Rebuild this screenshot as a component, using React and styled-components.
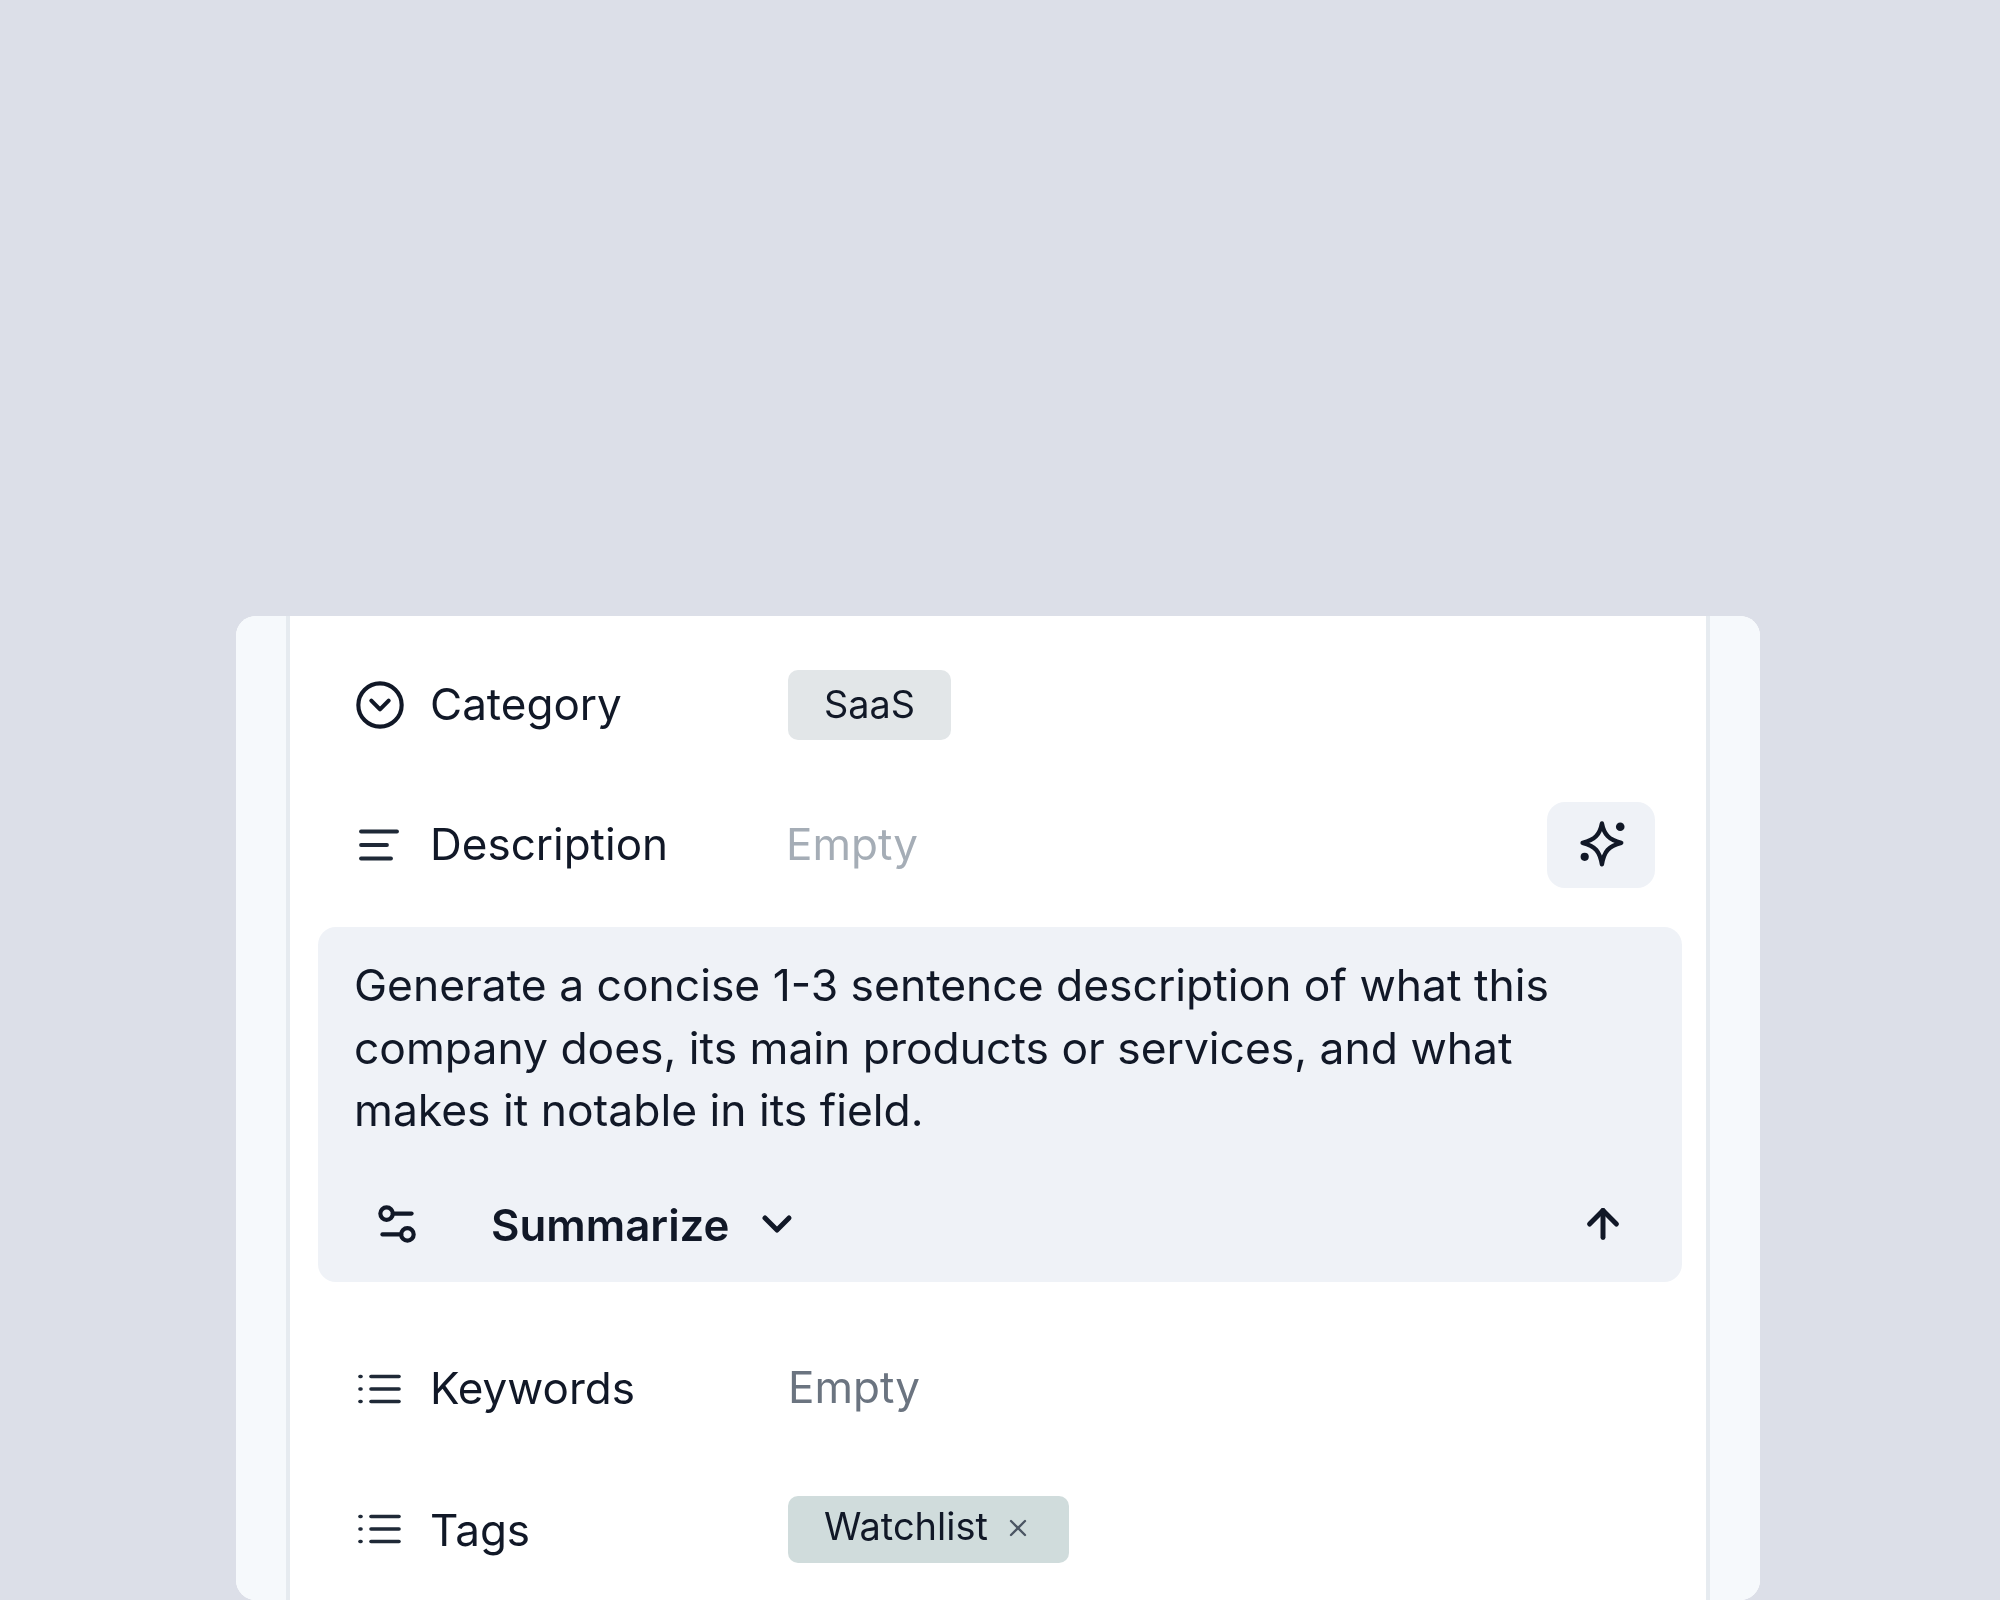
import React from 'react';
import styled, { createGlobalStyle } from 'styled-components';
import { ArrowUp, ChevronDown, CircleChevronDown, Settings2, X } from 'lucide-react';

const GlobalStyle = createGlobalStyle`
    html, body {
        margin: 0;
        background: #dcdfe8;
    }
    body {
        font-family: Inter, "Liberation Sans", sans-serif;
        color: #111827;
    }
`;

function TextLinesIcon() {
    return (
        <svg width="48" height="36" viewBox="0 0 48 36" fill="none" stroke="#1f2937" strokeWidth="3.8" strokeLinecap="round">
            <path d="M6 4.500h36" />
            <path d="M6 18h26" />
            <path d="M6 31.500h30" />
        </svg>
    );
}

function DotListIcon() {
    return (
        <svg width="48" height="36" viewBox="0 0 48 36" fill="none" stroke="#1f2937" strokeWidth="3.6" strokeLinecap="round">
            <path d="M16 5.500h28" />
            <path d="M16 18h28" />
            <path d="M16 30.500h28" />
            <path d="M5 5.500h1" />
            <path d="M5 18h1" />
            <path d="M5 30.500h1" />
        </svg>
    );
}

function SparkleIcon() {
    return (
        <svg width="56" height="56" viewBox="0 0 52 52" fill="none" stroke="#111827" strokeWidth="4" strokeLinejoin="round">
            <path d="M25 6c2 10 6 15 18 18-12 3-16 8-18 20-2-12-6-17-18-20 12-3 16-8 18-18z" />
            <circle cx="42" cy="9" r="4" fill="#111827" stroke="none" />
            <circle cx="9" cy="37" r="3.800" fill="#111827" stroke="none" />
        </svg>
    );
}

function App() {
    return (
        <Page>
            <GlobalStyle />
            <Card>
                <SideBand />
                <Main>
                    <Row $top={54} $height={70}>
                        <IconCell $shift={-1}><CircleChevronDown size={52} strokeWidth={1.9} color="#111827" /></IconCell>
                        <Label>Category</Label>
                        <Value>
                            <Chip $bg="#e2e6e8" $height={70} $size={37.8} $lift={3}>SaaS</Chip>
                        </Value>
                    </Row>
                    <Row $top={62} $height={86}>
                        <IconCell><TextLinesIcon /></IconCell>
                        <Label>Description</Label>
                        <Value>
                            <Empty $light>Empty</Empty>
                            <AiButton><SparkleIcon /></AiButton>
                        </Value>
                    </Row>
                    <PromptBox>
                        <PromptText>
                            Generate a concise 1-3 sentence description of what this company does, its main products or services, and what makes it notable in its field.
                        </PromptText>
                        <PromptFooter>
                            <FilterSlot><Settings2 size={50} strokeWidth={2} color="#111827" /></FilterSlot>
                            <ModeName>Summarize</ModeName>
                            <ChevronDown size={48} strokeWidth={2.5} color="#111827" />
                            <SendSlot><ArrowUp size={46} strokeWidth={2.6} color="#111827" /></SendSlot>
                        </PromptFooter>
                    </PromptBox>
                    <Row $top={72} $height={70}>
                        <IconCell><DotListIcon /></IconCell>
                        <Label>Keywords</Label>
                        <Value>
                            <Empty>Empty</Empty>
                        </Value>
                    </Row>
                    <Row $top={72} $height={67}>
                        <IconCell><DotListIcon /></IconCell>
                        <Label $drop={3}>Tags</Label>
                        <Value>
                            <Chip $bg="#d0dcdc" $height={67} $size={38} $lift={6}>
                                Watchlist
                                <ChipClose><X size={28} strokeWidth={2} color="#4b5563" /></ChipClose>
                            </Chip>
                        </Value>
                    </Row>
                </Main>
                <SideBand $right />
            </Card>
        </Page>
    );
}

const Page = styled.div`
    height: 1600px;
    padding: 616px 240px 0 236px;
    box-sizing: border-box;
    overflow: hidden;
`;

const Card = styled.div`
    display: flex;
    height: 984px;
    border-radius: 20px;
    overflow: hidden;
    background: #fff;
`;

const SideBand = styled.div`
    box-sizing: border-box;
    width: 54px;
    flex-shrink: 0;
    background: #f6f9fc;
    ${props => (props.$right ? 'border-left: 4px solid #e6ebf0;' : 'border-right: 4px solid #e6ebf0;')}
`;

const Main = styled.div`
    flex: 1;
    min-width: 0;
    filter: blur(0.6px);
`;

const Row = styled.div`
    display: grid;
    grid-template-columns: 75px 358px 1fr;
    align-items: center;
    height: ${props => props.$height}px;
    margin-top: ${props => props.$top}px;
    padding-left: 65px;
    padding-right: 51px;
`;

const IconCell = styled.div`
    display: flex;
    align-items: center;
    margin-left: ${props => props.$shift || 0}px;
`;

const Label = styled.div`
    font-size: 44px;
    font-weight: 420;
    line-height: 1;
    margin-top: ${props => props.$drop || 0}px;
    margin-bottom: 2px;
    color: #111827;
`;

const Value = styled.div`
    display: flex;
    align-items: center;
    justify-content: space-between;
`;

const Chip = styled.div`
    display: inline-flex;
    align-items: center;
    box-sizing: border-box;
    height: ${props => props.$height}px;
    padding: 0 36px ${props => props.$lift}px;
    border-radius: 10px;
    background: ${props => props.$bg};
    font-size: ${props => props.$size}px;
    color: #111827;
`;

const ChipClose = styled.span`
    display: flex;
    margin: 4px 1px 0 16px;
`;

const Empty = styled.div`
    font-size: 44px;
    margin-bottom: 3px;
    color: ${props => (props.$light ? '#a5adb6' : '#6b7480')};
    margin-left: ${props => (props.$light ? '-2px' : '0')};
`;

const AiButton = styled.div`
    display: flex;
    align-items: center;
    justify-content: center;
    box-sizing: border-box;
    width: 108px;
    height: 86px;
    padding-left: 3px;
    border-radius: 18px;
    background: #eff2f7;
`;

const PromptBox = styled.div`
    box-sizing: border-box;
    width: 1364px;
    margin: 39px 0 0 28px;
    padding: 27px 60px 28px 36px;
    border-radius: 18px;
    background: #eff2f7;
`;

const PromptText = styled.div`
    font-size: 44.4px;
    font-weight: 430;
    line-height: 62.5px;
    color: #111827;
`;

const PromptFooter = styled.div`
    display: flex;
    align-items: center;
    height: 60px;
    margin-top: 52px;
    margin-right: -24px;
`;

const FilterSlot = styled.div`
    display: flex;
    width: 137px;
    padding-left: 18px;
    box-sizing: border-box;
`;

const ModeName = styled.div`
    font-size: 43.8px;
    font-weight: 600;
    color: #111827;
    margin-top: 4px;
    margin-right: 23px;
`;

const SendSlot = styled.div`
    display: flex;
    margin-left: auto;
    margin-right: 20px;
`;

export default App;
